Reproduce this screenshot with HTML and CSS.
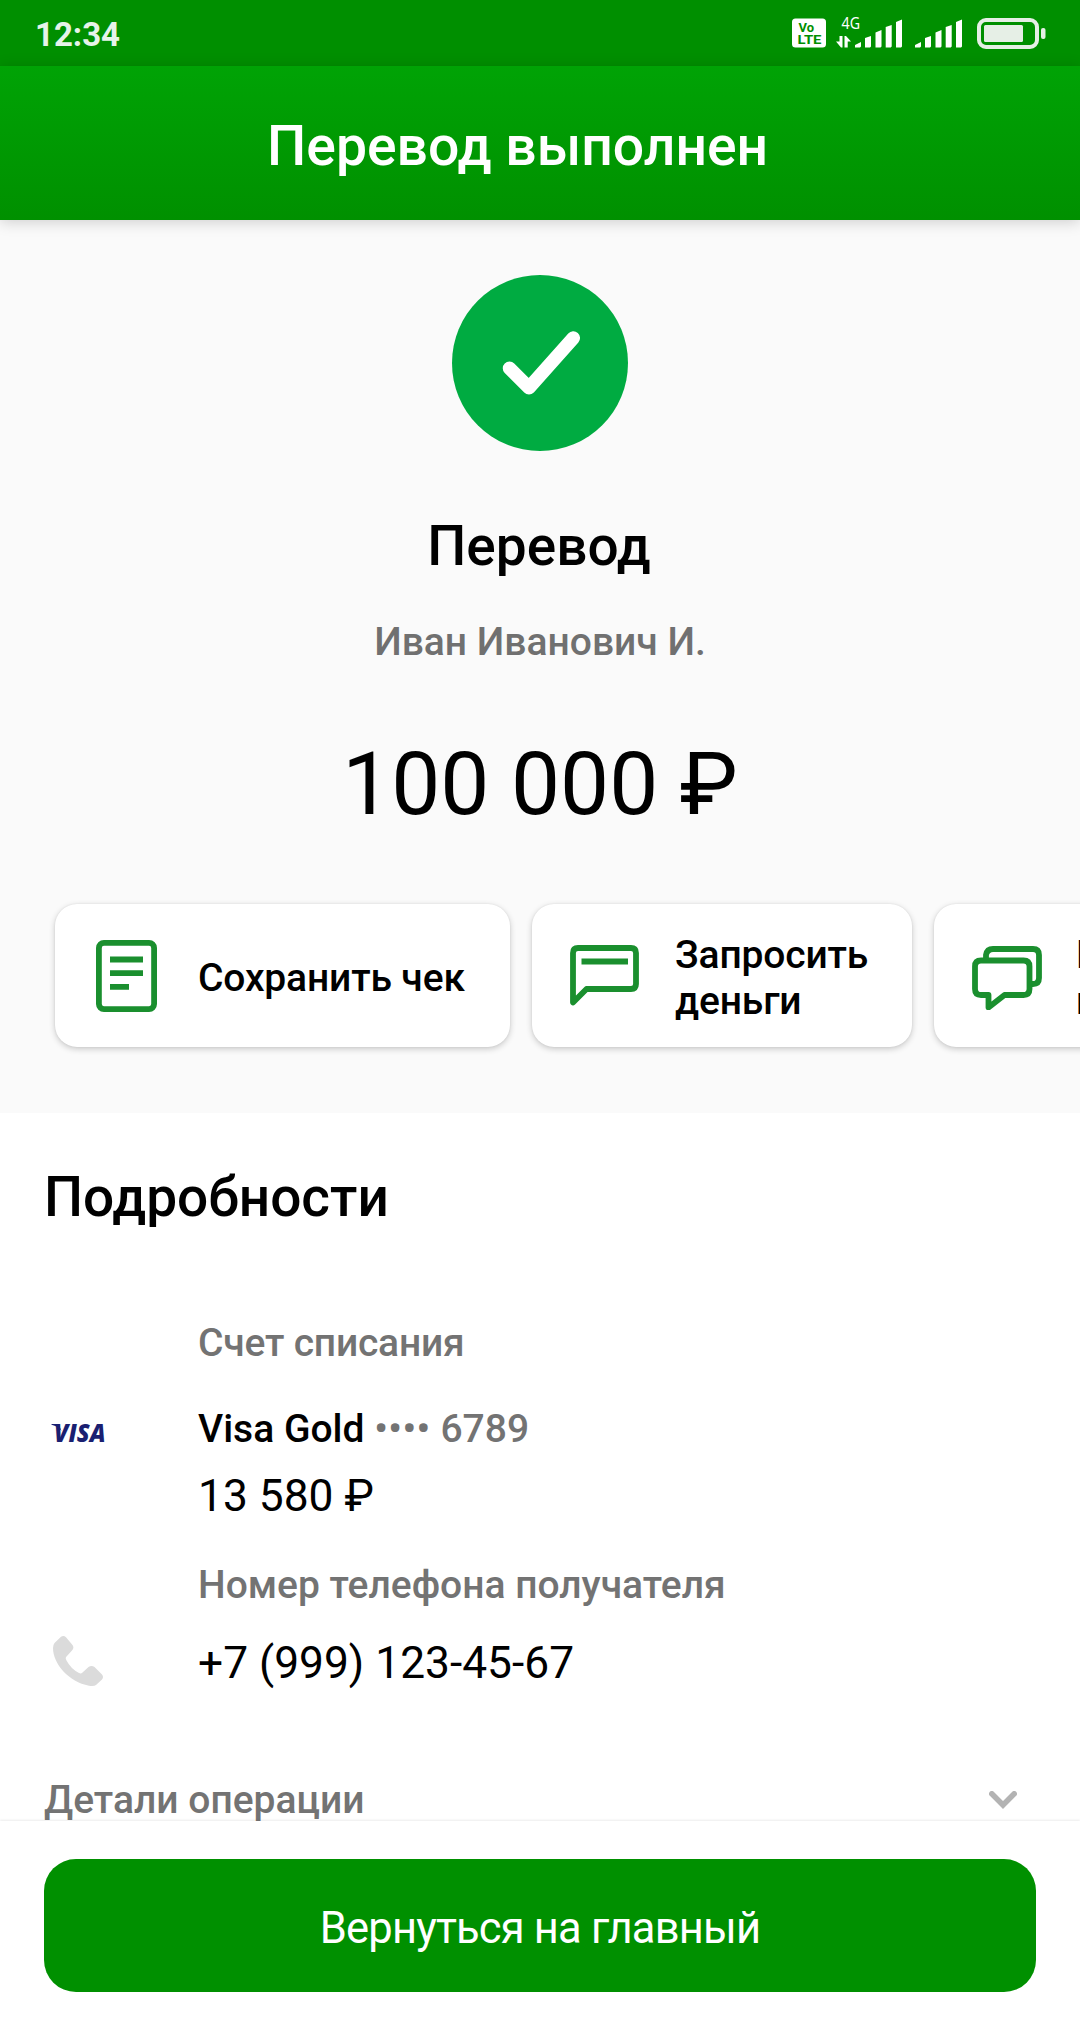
FILE: index.html
```html
<!DOCTYPE html>
<html lang="ru">
<head>
<meta charset="utf-8">
<title>Перевод выполнен</title>
<link rel="stylesheet" href="styles.css">
</head>
<body>
<div class="screen">
  <div class="status">
    <span class="clock">12:34</span>
    <svg class="indicators" width="255" height="55" viewBox="791 6 255 55">
      <rect x="792" y="18.500" width="34" height="29" rx="3.500" fill="#fff"/>
      <text class="volte" x="798.500" y="32" textLength="15.500" lengthAdjust="spacingAndGlyphs">Vo</text>
      <text class="volte volte-lte" x="797.500" y="44" textLength="24" lengthAdjust="spacingAndGlyphs">LTE</text>
      <text class="net" x="841.500" y="29" textLength="18.500" lengthAdjust="spacingAndGlyphs">4G</text>
      <path d="M839.500 36h3v11.500h-1.500l-5-6h3.500zM844.500 47.500v-11.500h1.500l5 5.500h-3.300v6z" fill="#fff"/>
      <g id="bars" fill="#fff">
        <path d="M855 47.500v-2.500l6-3v4.500l-1 1zM865 47.500v-9.500l6-2v10.500l-1 1zM875.500 47.500v-15l6-2.500v16.500l-1 1zM885.700 47.500v-20.500l6-2v21.500l-1 1zM896 47.500v-25.500l6-2.500v27l-1 1z"/>
      </g>
      <use href="#bars" x="60"/>
      <rect x="979" y="20" width="58" height="27" rx="7" fill="none" stroke="#e6efe6" stroke-width="4"/>
      <rect x="984" y="25" width="39" height="17" rx="1.500" fill="#e6efe6"/>
      <rect x="1041" y="28" width="4.500" height="11" rx="2" fill="#e6efe6"/>
    </svg>
  </div>
  <header class="header"><h1>Перевод выполнен</h1></header>
  <section class="summary">
    <svg class="check" width="176" height="176" viewBox="0 0 176 176">
      <circle cx="88" cy="88" r="88" fill="#00ab41"/>
      <path d="M57.500 93.300 77 112.800 121.300 63" fill="none" stroke="#fff" stroke-width="13.500" stroke-linecap="round" stroke-linejoin="round"/>
    </svg>
    <h2 class="kind">Перевод</h2>
    <p class="person">Иван Иванович И.</p>
    <p class="amount">100 000 ₽</p>
    <div class="actions">
      <div class="card card-save">
        <svg class="icon" width="61" height="72" viewBox="0 0 61 72"><rect x="2.900" y="2.900" width="55.200" height="66.200" rx="5"/><path d="M14 19.500h33M14 33.200h33M14 46.900h19"/></svg>
        <span>Сохранить чек</span>
      </div>
      <div class="card card-request">
        <svg class="icon" width="69" height="61" viewBox="0 0 69 61"><path d="M3 57.500V8q0-5 5-5h53q5 0 5 5v31q0 5-5 5H16.500z"/><path d="M11.500 16.500h46.500"/></svg>
        <span>Запросить<br>деньги</span>
      </div>
      <div class="card card-repeat">
        <svg class="icon" width="70" height="64" viewBox="0 0 70 64"><path d="M14 12V9q1-6 7-6H61q6 0 6 6v23q0 6-6 6h-4"/><path d="M9 14.500h42.500q6 0 6 6V43q0 6-6 6H32.500L16.500 61.500V49H9q-6 0-6-6V20.500q0-6 6-6z"/></svg>
        <span>Повторить<br>перевод</span>
      </div>
    </div>
  </section>
  <section class="details">
    <h2 class="details-title">Подробности</h2>
    <div class="row">
      <p class="label label-account">Счет списания</p>
      <svg class="visa" width="58" height="20" viewBox="0 0 58 20"><path d="M1.500 1h7l3 7Q8 3 1.500 1.700z" fill="#1a1f71"/><text x="4" y="19" textLength="51.500" lengthAdjust="spacingAndGlyphs">VISA</text></svg>
      <p class="account">Visa Gold <span class="muted"><span class="dots">••••</span> 6789</span></p>
      <p class="value">13 580 ₽</p>
    </div>
    <div class="row row-phone">
      <p class="label">Номер телефона получателя</p>
      <svg class="phone" width="50" height="50" viewBox="0 0 50 50"><path d="M8 .8Q10.500-.8 13 1.200L19.500 9Q21.500 12 19 14.500L13.500 20.500Q12 22 13.500 24.500Q18 33 26 37Q28 38 29.500 36.500L35.500 31Q38.500 29 41.500 31L49 38.500Q51 41 49 43.500L43 49Q41 50.500 36 49.700C16 46 0 28 0 12Q0 9 1.500 7z" fill="#dbdbdb"/></svg>
      <p class="value">+7 (999) 123-45-67</p>
    </div>
    <div class="more">
      <span>Детали операции</span>
      <svg width="28" height="18" viewBox="0 0 28 18"><path d="M2.800 2.800 14 14 25.200 2.800" fill="none" stroke="#b3b3b3" stroke-width="5.500" stroke-linecap="round"/></svg>
    </div>
  </section>
  <footer class="footer"><button class="home" type="button">Вернуться на главный</button></footer>
</div>
</body>
</html>
```
FILE: styles.css
```css
* { box-sizing: border-box; }
body { margin: 0; background: #fff; font-family: Roboto, "Noto Sans", sans-serif; color: #000; }
h1, h2, p { margin: 0; font-weight: 500; white-space: nowrap; }
svg { display: block; flex: none; }

.screen { width: 1080px; height: 2030px; display: flex; flex-direction: column; overflow: hidden; }

.status { height: 66px; flex: none; display: flex; justify-content: space-between; align-items: center; padding: 1px 34px 0 35px; background: #008f00; }
.clock { padding-top: 2px; font-size: 33px; line-height: 38px; font-weight: 700; color: #e6f3e9; }
.volte { font: 700 12px Roboto, sans-serif; fill: #008f00; }
.volte-lte { font-size: 12.5px; }
.net { font: 400 16px "Noto Sans", sans-serif; fill: #fff; }

.header { height: 154px; flex: none; padding: 48px 0 0 267px; background: linear-gradient(#00a305, #009000); box-shadow: 0 2px 14px rgba(0, 0, 0, .18); z-index: 1; }
.header h1 { font-size: 55.3px; line-height: 66px; color: #fff; }

.summary { height: 893px; flex: none; display: flex; flex-direction: column; align-items: center; padding-top: 55px; background: #fafafa; }
.kind { margin: 62px 2px 0 0; font-size: 55px; line-height: 66px; }
.person { margin-top: 39px; font-size: 39px; line-height: 48px; color: #707070; }
.amount { margin-top: 66px; font-size: 87.300px; line-height: 104px; font-weight: 400; }
.actions { align-self: stretch; display: flex; gap: 22px; margin-top: 68px; padding-left: 55px; }
.card { height: 143px; flex: none; display: flex; align-items: center; gap: 41px; border-radius: 22px; background: #fff; box-shadow: 0 2px 6px rgba(0, 0, 0, .2), 0 0 2px rgba(0, 0, 0, .08); font-size: 39px; line-height: 46px; font-weight: 500; white-space: nowrap; }
.card span { padding-top: 5px; letter-spacing: -.15px; }
.card-save { width: 455px; padding-left: 41px; }
.card-request { width: 380px; padding-left: 38px; gap: 36px; }
.card-repeat { width: 380px; padding-left: 38px; gap: 34px; }
.card-repeat .icon { margin-top: 5px; }
.icon { fill: none; stroke: #1a8f2e; stroke-width: 5.800px; stroke-linejoin: round; }

.details { height: 708px; flex: none; padding: 51px 63px 0 44px; overflow: hidden; }
.details-title { font-size: 55px; line-height: 66px; }
.row { display: grid; grid-template-columns: 154px 1fr; align-items: center; margin-top: 89px; }
.label { grid-column: 2; font-size: 39px; line-height: 48px; color: #737373; }
.label-account { letter-spacing: -.200px; }
.visa { margin: 46px 0 0 6px; overflow: visible; }
.visa text { font: italic 800 25px "Open Sans", sans-serif; fill: #1a1f71; }
.account { margin-top: 38px; font-size: 39px; line-height: 48px; font-weight: 500; }
.muted { color: #737373; }
.dots { letter-spacing: .5px; }
.value { grid-column: 2; margin-top: 16px; font-size: 44.300px; line-height: 54px; font-weight: 400; }
.row-phone { margin-top: 38px; }
.row-phone .value { margin-top: 27px; }
.phone { margin: 23px 0 0 9px; }
.more { display: flex; justify-content: space-between; align-items: center; margin-top: 86px; font-size: 39px; line-height: 48px; font-weight: 500; color: #737373; }

.footer { height: 209px; flex: none; padding: 38px 44px 0; background: #fff; box-shadow: 0 -1px 2px rgba(0, 0, 0, .08); z-index: 1; }
.home { display: block; width: 992px; height: 133px; padding: 6px 0 0; border: 0; border-radius: 32px; background: #009000; font: 400 43.500px Roboto, sans-serif; letter-spacing: -.820px; color: #fff; }
```
